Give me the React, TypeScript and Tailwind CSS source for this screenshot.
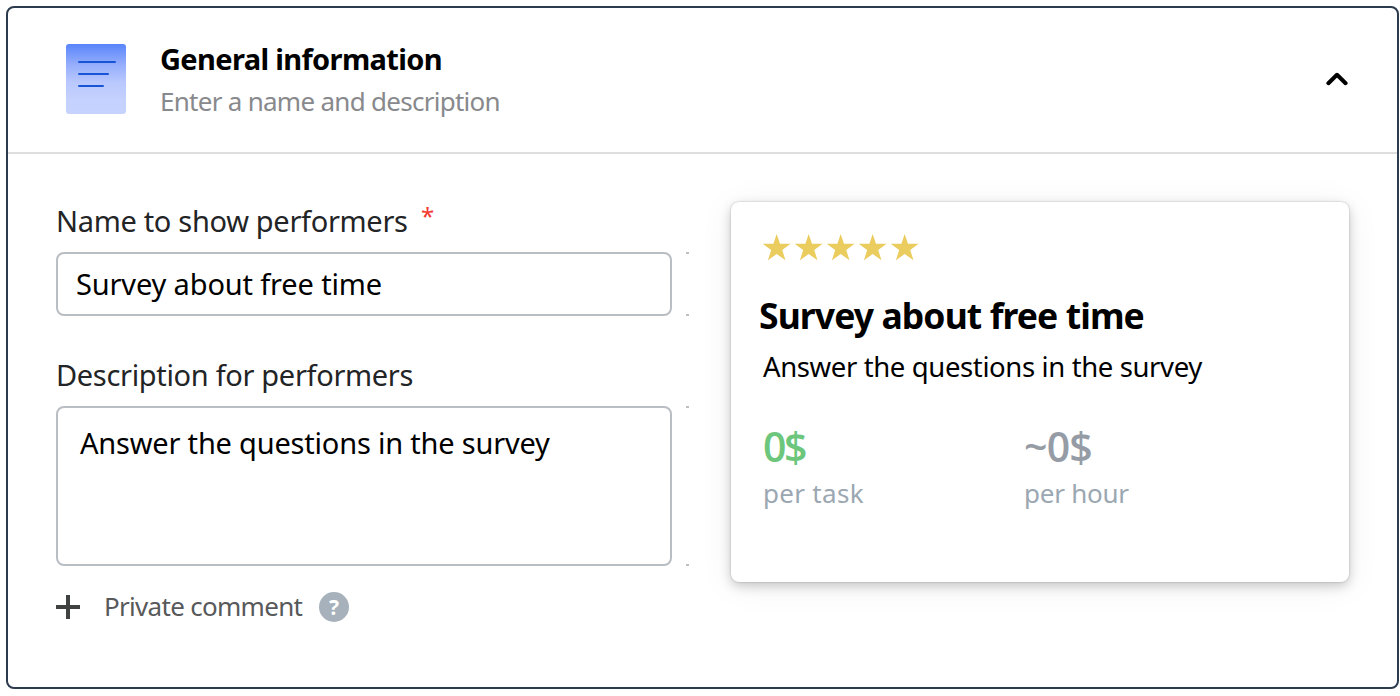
import React from "react";

function Star() {
  return (
    <svg width="28" height="27" viewBox="0 0 28 27" fill="#ebcc5e" aria-hidden="true">
      <path d="M13.7 0L17 9.8H27.6L19.2 16.1L22.5 26.2L13.7 20.1L4.9 26.2L8.2 16.1L-0.1 9.8H10.4Z" />
    </svg>
  );
}

function SideMarks({ children }: { children: React.ReactNode }) {
  return (
    <div className="flex w-[633px] justify-between">
      {children}
      <div className="flex w-[3px] flex-col justify-between">
        <span className="h-[2px] bg-[#bcc0c3]" />
        <span className="h-[2px] bg-[#bcc0c3]" />
      </div>
    </div>
  );
}

function Header() {
  return (
    <header className="flex h-[146px] justify-between border-b-2 border-[#dedede] pr-[49px] pl-[58px]">
      <div className="flex">
        <svg className="mt-9" width="60" height="70" viewBox="0 0 60 70" aria-hidden="true">
          <defs>
            <linearGradient id="sheet" x1="0" y1="0" x2="0" y2="1">
              <stop offset="0" stopColor="#5985fb" />
              <stop offset="0.3" stopColor="#96aefc" />
              <stop offset="0.55" stopColor="#b9c8fd" />
              <stop offset="0.8" stopColor="#c5d1fe" />
              <stop offset="1" stopColor="#c7d3fe" />
            </linearGradient>
          </defs>
          <rect width="60" height="70" rx="3" fill="url(#sheet)" />
          <path d="M13 18H49M13 30H42M13 42H37" stroke="#1755d6" strokeWidth="2" strokeLinecap="round" />
        </svg>
        <div className="ml-[34px] pt-[30px] whitespace-nowrap">
          <h1 className="text-[29px] leading-[42px] font-bold tracking-[-0.64px] text-black">General information</h1>
          <p className="text-[26px] leading-[42px] tracking-[-0.72px] text-[#88898c]">Enter a name and description</p>
        </div>
      </div>
      <svg className="mt-[60px]" width="22" height="22" viewBox="0 0 22 22" fill="none" aria-hidden="true">
        <path d="M2.4 15.2L11 6.8L19.6 15.2" stroke="#000" strokeWidth="4" strokeLinecap="round" strokeLinejoin="round" />
      </svg>
    </header>
  );
}

function PreviewCard() {
  return (
    <section className="h-[380px] w-[618px] rounded-lg bg-white pt-8 pl-8 whitespace-nowrap shadow-[0_0_2px_rgba(0,0,0,0.25),0_4px_12px_rgba(0,0,0,0.2),0_4px_36px_rgba(0,0,0,0.06)]">
      <div className="flex h-7 gap-1">
        <Star />
        <Star />
        <Star />
        <Star />
        <Star />
      </div>
      <h2 className="mt-[29px] -ml-1 text-[35.5px] leading-[48px] font-bold tracking-[-0.9px] text-black">Survey about free time</h2>
      <p className="mt-[10px] text-[27.5px] leading-[36px] tracking-[-0.38px] text-black">Answer the questions in the survey</p>
      <div className="mt-[37px] flex">
        <div className="w-[261px]">
          <div className="font-['Open_Sans'] text-[41px] leading-[48px] font-semibold tracking-[-2.4px] text-[#6cc67c]">0$</div>
          <div className="mt-[7px] text-[26px] leading-[32px] tracking-[0.3px] text-[#9ba7b1]">per task</div>
        </div>
        <div>
          <div className="font-['Open_Sans'] text-[41px] leading-[48px] font-semibold tracking-[-0.8px] text-[#959ca5]">~0$</div>
          <div className="mt-[7px] text-[26px] leading-[32px] tracking-[-0.25px] text-[#9ba7b1]">per hour</div>
        </div>
      </div>
    </section>
  );
}

export default function App() {
  return (
    <div className="h-[696px] w-[1400px] overflow-hidden bg-white pt-[6px] pl-[6px] font-['Noto_Sans',sans-serif]">
      <main className="h-[683px] w-[1393px] rounded-lg border-2 border-[#2c3b4e]">
        <Header />
        <div className="flex pt-12 pl-12">
          <div className="w-[675px] whitespace-nowrap">
            <div className="mb-3 flex h-[38px] text-[29px] leading-[38px] text-[#232426]">
              <span className="w-[365px] tracking-[-0.32px]">Name to show performers</span>
              <span className="text-[24px] leading-[28px] text-[#f33a30]">*</span>
            </div>
            <SideMarks>
              <div className="flex h-16 w-[616px] items-center rounded-lg border-2 border-[#b9bec3] pl-[18px] text-[29px] tracking-[-0.15px] text-black">
                Survey about free time
              </div>
            </SideMarks>
            <div className="mt-10 mb-3 text-[29px] leading-[38px] tracking-[-0.33px] text-[#232426]">Description for performers</div>
            <SideMarks>
              <div className="h-40 w-[616px] rounded-lg border-2 border-[#b9bec3] pt-4 pl-[22px] text-[29px] leading-[38px] tracking-[-0.2px] text-black">
                Answer the questions in the survey
              </div>
            </SideMarks>
            <div className="mt-[26px] flex h-[30px]">
              <svg className="mt-[3px]" width="24" height="24" viewBox="0 0 24 24" aria-hidden="true">
                <path d="M12 0V24M0 12H24" stroke="#404141" strokeWidth="4" />
              </svg>
              <span className="ml-6 w-[215px] text-[26px] leading-[28px] tracking-[-0.7px] text-[#58595a]">Private comment</span>
              <span className="flex h-[30px] w-[30px] items-center justify-center rounded-full bg-[#a6b1bb] text-[21px] leading-[30px] font-bold text-white">
                ?
              </span>
            </div>
          </div>
          <PreviewCard />
        </div>
      </main>
    </div>
  );
}
